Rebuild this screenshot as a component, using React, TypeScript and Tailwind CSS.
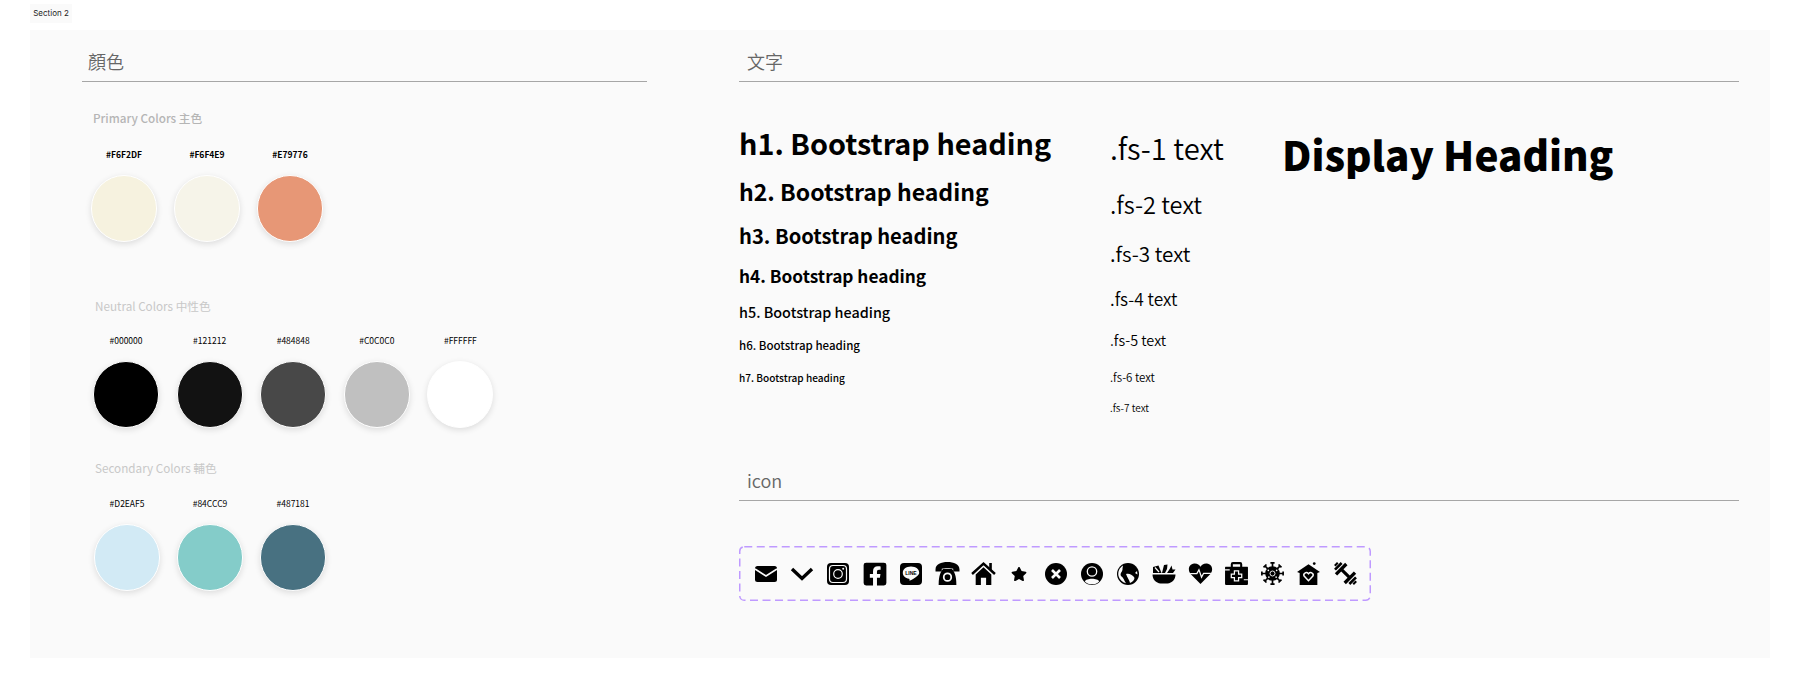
import React from "react";
import { FaFacebookSquare, FaStar } from "react-icons/fa";

const bg = "#fafafa";

function Mail() {
  return (
    <svg viewBox="0 0 24 24" className="w-[24px] h-[24px]">
      <rect x="1" y="4" width="22" height="16" rx="2.5" fill="#000" />
      <path d="M1 7 L12 14 L23 7" stroke={bg} strokeWidth="1.6" fill="none" />
    </svg>
  );
}
function Chevron() {
  return (
    <svg viewBox="0 0 24 24" className="w-[24px] h-[24px]">
      <path d="M2 7 L12 16.5 L22 7" stroke="#000" strokeWidth="3.4" fill="none" />
    </svg>
  );
}
function Insta() {
  return (
    <svg viewBox="0 0 24 24" className="w-[24px] h-[24px]">
      <rect x="1" y="1" width="22" height="22" rx="4" fill="#000" />
      <rect x="3.5" y="3.500" width="17" height="17" rx="3.5" fill="none" stroke={bg} strokeWidth="1.2" />
      <circle cx="12" cy="12" r="4.300" fill="none" stroke={bg} strokeWidth="1.2" />
      <circle cx="17.200" cy="6.800" r="1" fill={bg} />
    </svg>
  );
}
function LineIcon() {
  return (
    <svg viewBox="0 0 24 24" className="w-[24px] h-[24px]">
      <rect x="1" y="1" width="22" height="22" rx="4" fill="#000" />
      <path d="M12 4.500 C7 4.500 3.800 7.300 3.800 10.800 C3.800 14 6.500 16.200 10 16.800 C10.800 17 10.500 18 10.500 18.800 C12.500 18 16.500 15.800 18.500 13.800 C19.600 12.700 20.200 11.800 20.200 10.800 C20.200 7.300 17 4.500 12 4.500 Z" fill={bg} />
      <text x="12" y="12.500" textAnchor="middle" fontSize="5" fontWeight="700" fill="#000" fontFamily="'Liberation Sans',sans-serif">LINE</text>
    </svg>
  );
}
function Phone() {
  return (
    <svg viewBox="0 0 24 24" className="w-[25px] h-[25px]">
      <path d="M0.500 8 C0.500 3 6 1 12 1 C18 1 23.500 3 23.500 8 L23.500 10 L17.500 10 L17.500 7.500 C15 6.600 9 6.600 6.500 7.500 L6.500 10 L0.500 10 Z" fill="#000" />
      <path d="M8 7.500 L16 7.500 C18.500 10 20.500 14 20.500 23 L3.500 23 C3.500 14 5.500 10 8 7.500 Z" fill="#000" />
      <circle cx="12" cy="15.500" r="3.600" fill="none" stroke={bg} strokeWidth="1.700" />
    </svg>
  );
}
function Home() {
  return (
    <svg viewBox="0 0 24 24" className="w-[25px] h-[25px]">
      <path d="M1 12.500 L12 2.500 L23 12.500" stroke="#000" strokeWidth="2.400" fill="none" />
      <path d="M17.500 2 L20 2 L20 9 L17.500 6.500 Z" fill="#000" />
      <path d="M4.500 13 L12 6 L19.500 13 L19.500 23 L14.500 23 L14.500 16 L9.500 16 L9.500 23 L4.500 23 Z" fill="#000" />
    </svg>
  );
}
function XCircle() {
  return (
    <svg viewBox="0 0 24 24" className="w-[24px] h-[24px]">
      <circle cx="12" cy="12" r="11" fill="#000" />
      <path d="M8 8 L16 16 M16 8 L8 16" stroke={bg} strokeWidth="2.600" />
    </svg>
  );
}
function User() {
  return (
    <svg viewBox="0 0 24 24" className="w-[24px] h-[24px]">
      <circle cx="12" cy="12" r="11" fill="#000" />
      <circle cx="12" cy="9.500" r="4.700" fill="#000" stroke={bg} strokeWidth="1.300" />
      <path d="M4.800 19.500 C6 15.800 18 15.800 19.200 19.500 C15.500 23.300 8.500 23.300 4.800 19.500 Z" fill={bg} />
    </svg>
  );
}
function Globe() {
  return (
    <svg viewBox="0 0 24 24" className="w-[24px] h-[24px]">
      <circle cx="12" cy="12" r="11" fill="#000" />
      <path d="M7 3.500 C3 6 1.800 10 2.500 14 C3.500 17.500 6 20.300 10 21.300 C8 18.500 7.800 16 5 14 C3.500 11 7 9.500 6.500 6.500 Z" fill={bg} />
      <path d="M10 12 C13 11 16 12.500 18 15 C19.500 17 16.500 20 14 21 C13.500 18 11.500 16 10 12 Z M21 9 L19 11 L21.500 12.500 Z" fill={bg} />
    </svg>
  );
}
function Salad() {
  return (
    <svg viewBox="0 0 24 24" className="w-[24px] h-[24px]">
      <path d="M0.500 12.500 L23.500 12.500 C23.500 17.500 20 21 15.500 21.500 L8.500 21.500 C4 21 0.500 17.500 0.500 12.500 Z" fill="#000" />
      <path d="M1 11 L1 5 L6.500 3.500 L9.500 11 Z" fill="#000" />
      <path d="M3 5.500 L7 10" stroke={bg} strokeWidth="1.200" />
      <path d="M10 11 L12 3 L15.500 2.500 L15 7 L13 11 Z" fill="#000" />
      <path d="M15 11 L18 6.500 L19.500 3.500 L20.500 7.500 L23.500 7.500 L21 11 Z" fill="#000" />
    </svg>
  );
}
function HeartPulse() {
  return (
    <svg viewBox="0 0 24 24" className="w-[25px] h-[25px]">
      <path d="M12 22 L2.500 12.500 C-0.500 9 0.500 3 6 2.500 C9 2.300 11 4 12 5.500 C13 4 15 2.300 18 2.500 C23.500 3 24.500 9 21.500 12.500 Z" fill="#000" />
      <path d="M2 12 L8.500 12 L10.500 8.500 L13 15.500 L15 11.800 L22 11.800" stroke={bg} strokeWidth="1.200" fill="none" />
    </svg>
  );
}
function Medkit() {
  return (
    <svg viewBox="0 0 24 24" className="w-[25px] h-[25px]">
      <path d="M6.500 6 L6.500 3 Q6.500 1 8.500 1 L15.500 1 Q17.500 1 17.500 3 L17.500 6 L15.500 6 L15.500 3 L8.500 3 L8.500 6 Z" fill="#000" />
      <path d="M1.500 5.500 L22.500 5.500 Q23 5.500 23 6 L23 22 Q23 23 22 23 L2 23 Q1 23 1 22 L1 6 Q1 5.500 1.500 5.500 Z" fill="#000" />
      <path d="M10 9.500 L14 9.500 L14 12.500 L17 12.500 L17 16 L14 16 L14 19 L10 19 L10 16 L7 16 L7 12.500 L10 12.500 Z" fill="none" stroke={bg} strokeWidth="1.200" />
      <path d="M1 8.500 L5.500 8.500 M19 18 L23 18" stroke={bg} strokeWidth="1" />
    </svg>
  );
}
function Virus() {
  const angles = [0, 45, 90, 135, 180, 225, 270, 315];
  return (
    <svg viewBox="0 0 24 24" className="w-[25px] h-[25px]">
      {angles.map((a) => (
        <g key={a} transform={`rotate(${a} 12 12)`}>
          <path d="M12 6 L12 2 M10 1.800 L14 1.800" stroke="#000" strokeWidth="1.600" fill="none" />
        </g>
      ))}
      <circle cx="12" cy="12" r="7" fill="#000" />
      <circle cx="12" cy="12" r="2.400" fill="none" stroke={bg} strokeWidth="0.900" />
      <circle cx="8" cy="9" r="0.800" fill={bg} />
      <circle cx="16" cy="9" r="0.800" fill={bg} />
      <circle cx="8.500" cy="15.500" r="0.800" fill={bg} />
      <circle cx="15.500" cy="15.500" r="0.800" fill={bg} />
    </svg>
  );
}
function HouseHeart() {
  return (
    <svg viewBox="0 0 24 24" className="w-[25px] h-[25px]">
      <path d="M12 3 L23 10.500 L20.500 11.500 L20.500 23 L3.500 23 L3.500 11.500 L1 10.500 Z" fill="#000" />
      <circle cx="17.500" cy="2.500" r="1.300" fill="#000" />
      <path d="M12 19 L7.800 14.500 C6.500 12 9.800 9.800 12 12.300 C14.200 9.800 17.500 12 16.200 14.500 Z" fill="none" stroke={bg} strokeWidth="1.400" />
    </svg>
  );
}
function Dumbbell() {
  return (
    <svg viewBox="0 0 24 24" className="w-[25px] h-[25px]">
      <g transform="rotate(45 12 12)" fill="#000">
        <rect x="7" y="10.500" width="10" height="3" />
        <rect x="4.500" y="5" width="3.200" height="14" />
        <rect x="1" y="7.500" width="2.500" height="9" />
        <rect x="-1.500" y="10" width="2" height="4" />
        <rect x="16.300" y="5" width="3.200" height="14" />
        <rect x="20.500" y="7.500" width="2.500" height="9" />
        <rect x="23.500" y="10" width="2" height="4" />
      </g>
    </svg>
  );
}

const icons = [
  <Mail />,
  <Chevron />,
  <Insta />,
  <FaFacebookSquare className="w-[26px] h-[26px]" />,
  <LineIcon />,
  <Phone />,
  <Home />,
  <FaStar className="w-[16px] h-[16px]" />,
  <XCircle />,
  <User />,
  <Globe />,
  <Salad />,
  <HeartPulse />,
  <Medkit />,
  <Virus />,
  <HouseHeart />,
  <Dumbbell />,
];

function Swatch({ hex, bold }: { hex: string; bold?: boolean }) {
  return (
    <div className="w-[66px] flex flex-col items-center">
      <div className={`h-[14px] leading-[14px] text-[8.5px] text-black ${bold ? "font-bold" : "font-normal"}`}>{hex}</div>
      <div
        className="mt-[14px] w-[66px] h-[67px] rounded-full border-[1.5px] border-white shadow-[0_2px_6px_rgba(0,0,0,0.12)]"
        style={{ backgroundColor: hex }}
      />
    </div>
  );
}

function Title({ children, className }: { children: React.ReactNode; className?: string }) {
  return (
    <div className={`h-[52px] border-b-[1.5px] border-[#a6a6a6] pt-[18px] text-[18px] leading-[26px] font-[350] text-[#666] ${className ?? ""}`}>
      {children}
    </div>
  );
}

const headings = [
  { t: "h1. Bootstrap heading", c: "mt-[41px] h-[40px] leading-[40px] text-[28.8px] font-bold" },
  { t: "h2. Bootstrap heading", c: "mt-[12px] h-[32px] leading-[32px] text-[23.04px] font-bold" },
  { t: "h3. Bootstrap heading", c: "mt-[15px] h-[28px] leading-[28px] text-[20.16px] font-bold" },
  { t: "h4. Bootstrap heading", c: "mt-[14px] h-[24px] leading-[24px] text-[17.28px] font-bold" },
  { t: "h5. Bootstrap heading", c: "mt-[14px] h-[20px] leading-[20px] text-[14.4px] font-medium" },
  { t: "h6. Bootstrap heading", c: "mt-[15px] h-[16px] leading-[16px] text-[11.52px] font-medium" },
  { t: "h7. Bootstrap heading", c: "mt-[17.5px] h-[14px] leading-[14px] text-[10.08px] font-medium" },
];
const sizes = [
  { t: ".fs-1 text", c: "mt-[44.6px] h-[40px] leading-[40px] text-[29.2px] font-[350]" },
  { t: ".fs-2 text", c: "mt-[21px] h-[32px] leading-[32px] text-[23.6px] font-[350]" },
  { t: ".fs-3 text", c: "mt-[19px] h-[28px] leading-[28px] text-[20.6px] font-[350]" },
  { t: ".fs-4 text", c: "mt-[20px] h-[24px] leading-[24px] text-[17.3px] font-[350]" },
  { t: ".fs-5 text", c: "mt-[19px] h-[20px] leading-[20px] text-[14.4px] font-[350]" },
  { t: ".fs-6 text", c: "mt-[19px] h-[16px] leading-[16px] text-[11.5px] font-[350]" },
  { t: ".fs-7 text", c: "mt-[16.5px] h-[14px] leading-[14px] text-[10px] font-[350]" },
];

export default function App() {
  return (
    <div className="w-[1800px] h-[688px] bg-white overflow-hidden font-['Noto_Sans_CJK_TC','Noto_Sans',sans-serif] text-black">
      <div className="pl-[30px] pt-[4px] h-[30px]">
        <div className="w-[42px] h-[19px] pb-[2px] bg-[#fafafa] flex items-center justify-center text-[8px] font-['Inter',sans-serif] text-[#222] whitespace-nowrap">
          Section 2
        </div>
      </div>
      <div className="ml-[30px] w-[1740px] h-[628px] bg-[#fafafa] flex">
        <div className="ml-[52px] w-[565px]">
          <Title className="pl-[6px]">顏色</Title>
          <div className="ml-[9px]">
            <div className="mt-[26.5px] ml-[2px] h-[18px] leading-[18px] text-[11.7px] font-medium text-[#b5b5b5]">Primary Colors 主色</div>
            <div className="mt-[20.5px] flex gap-[17px]">
              <Swatch hex="#F6F2DF" bold />
              <Swatch hex="#F6F4E9" bold />
              <Swatch hex="#E79776" bold />
            </div>
          </div>
          <div className="ml-[11px]">
            <div className="mt-[55px] ml-[2px] h-[18px] leading-[18px] text-[11.7px] text-[#c8c8c8]">Neutral Colors 中性色</div>
            <div className="mt-[18px] flex gap-[17.6px]">
              <Swatch hex="#000000" />
              <Swatch hex="#121212" />
              <Swatch hex="#484848" />
              <Swatch hex="#C0C0C0" />
              <Swatch hex="#FFFFFF" />
            </div>
          </div>
          <div className="ml-[11px]">
            <div className="mt-[31px] ml-[2px] h-[18px] leading-[18px] text-[11.7px] text-[#c8c8c8]">Secondary Colors 輔色</div>
            <div className="mt-[19px] ml-[1px] flex gap-[17px]">
              <Swatch hex="#D2EAF5" />
              <Swatch hex="#84CCC9" />
              <Swatch hex="#487181" />
            </div>
          </div>
        </div>
        <div className="ml-[92px] w-[1000px]">
          <Title className="pl-[8px]">文字</Title>
          <div className="h-[367px] flex">
            <div className="w-[371px] whitespace-nowrap">
              {headings.map((h) => (
                <div key={h.t} className={h.c}>{h.t}</div>
              ))}
            </div>
            <div className="w-[172px] whitespace-nowrap">
              {sizes.map((h) => (
                <div key={h.t} className={h.c}>{h.t}</div>
              ))}
            </div>
            <div className="mt-[42px] h-[60px] leading-[60px] text-[40.4px] font-black whitespace-nowrap">Display Heading</div>
          </div>
          <Title className="pl-[8px]">icon</Title>
          <div className="relative mt-[45px] w-[632px] h-[55px] flex items-center pl-[9px]">
            <svg className="absolute inset-0 w-full h-full" viewBox="0 0 632 55" fill="none">
              <rect x="0.750" y="0.750" width="630.500" height="53.500" rx="4.500" stroke="#bf9aff" strokeWidth="1.500" strokeDasharray="8 4.500" />
            </svg>
            {icons.map((ic, i) => (
              <div key={i} className="w-[36.2px] h-[36px] shrink-0 flex items-center justify-center">{ic}</div>
            ))}
          </div>
        </div>
      </div>
    </div>
  );
}
